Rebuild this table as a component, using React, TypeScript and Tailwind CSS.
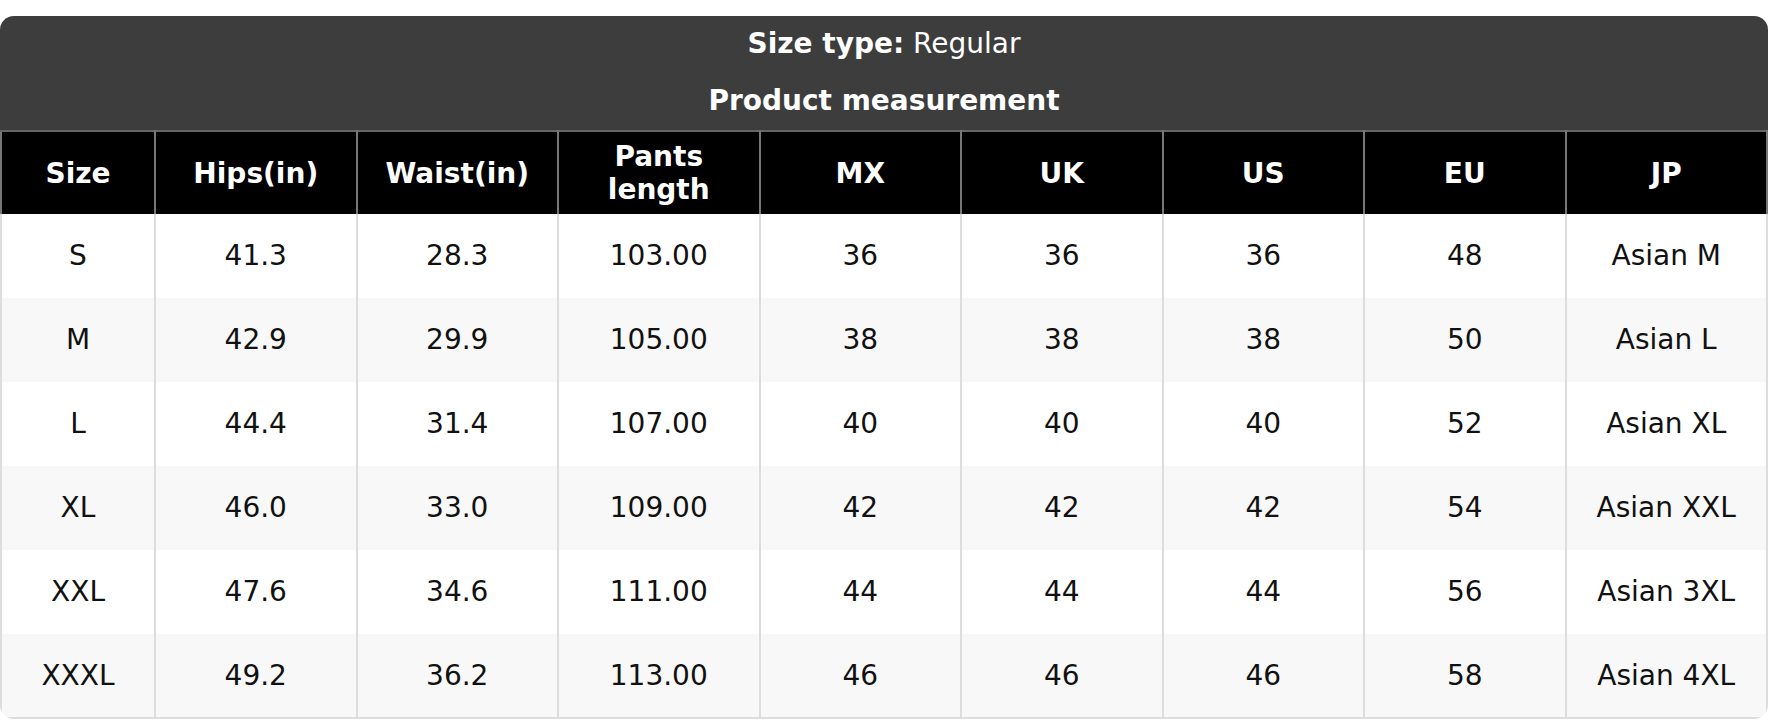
const HEADERS = ["Size", "Hips(in)", "Waist(in)", "Pants length", "MX", "UK", "US", "EU", "JP"];

const ROWS: string[][] = [
  ["S", "41.3", "28.3", "103.00", "36", "36", "36", "48", "Asian M"],
  ["M", "42.9", "29.9", "105.00", "38", "38", "38", "50", "Asian L"],
  ["L", "44.4", "31.4", "107.00", "40", "40", "40", "52", "Asian XL"],
  ["XL", "46.0", "33.0", "109.00", "42", "42", "42", "54", "Asian XXL"],
  ["XXL", "47.6", "34.6", "111.00", "44", "44", "44", "56", "Asian 3XL"],
  ["XXXL", "49.2", "36.2", "113.00", "46", "46", "46", "58", "Asian 4XL"],
];

export default function App() {
  return (
    <div className="min-h-[720px] bg-white pt-[16px] font-['DejaVu_Sans',sans-serif] text-[28px]">
      <div className="w-[1768px] overflow-hidden rounded-[14px]">
        <div className="flex flex-col items-center bg-[#3d3d3d] pt-[7px] pb-[8px] text-white">
          <p className="h-[42px] leading-[42px]">
            <span className="font-bold">Size type:</span> Regular
          </p>
          <p className="mt-[15px] h-[42px] font-bold leading-[42px]">Product measurement</p>
        </div>

        <table className="w-full table-fixed border-collapse">
          <colgroup>
            <col className="w-[154px]" />
            {HEADERS.slice(1).map((h) => (
              <col key={h} />
            ))}
          </colgroup>
          <thead>
            <tr className="bg-black text-white">
              {HEADERS.map((h) => (
                <th
                  key={h}
                  className="h-[83px] border-x-2 border-t-2 border-x-[#777] border-t-[#666] px-[20px] text-center font-bold leading-[33px]"
                >
                  {h === "Pants length" ? (
                    <>
                      Pants
                      <br />
                      length
                    </>
                  ) : (
                    h
                  )}
                </th>
              ))}
            </tr>
          </thead>
          <tbody>
            {ROWS.map((row, i) => (
              <tr key={row[0]} className={i % 2 === 0 ? "bg-white" : "bg-[#f8f8f8]"}>
                {row.map((cell, j) => (
                  <td
                    key={j}
                    className={
                      i === ROWS.length - 1
                        ? "h-[84px] border-x-2 border-b-2 border-[#dddddd] text-center text-[#111] leading-[34px]"
                        : "h-[84px] border-x-2 border-[#dddddd] text-center text-[#111] leading-[34px]"
                    }
                  >
                    {cell}
                  </td>
                ))}
              </tr>
            ))}
          </tbody>
        </table>
      </div>
    </div>
  );
}
